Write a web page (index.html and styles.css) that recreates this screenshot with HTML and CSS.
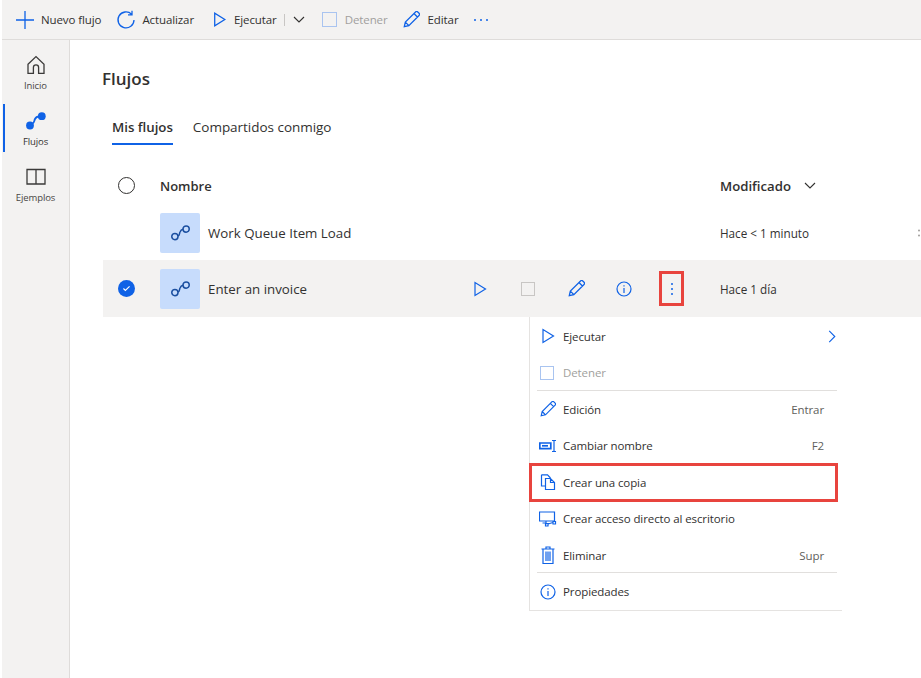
FILE: index.html
```html
<!DOCTYPE html>
<html lang="es">
<head>
<meta charset="utf-8">
<title>Flujos</title>
<link rel="stylesheet" href="styles.css">
</head>
<body>
<div class="app">
  <header class="toolbar">
    <button class="tool tool-new"><svg class="ic22" viewBox="0 0 20 20"><path d="M10 1v18M1 10h18"/></svg>Nuevo flujo</button>
    <button class="tool tool-refresh"><svg class="ic22" viewBox="0 0 20 20"><path d="M15.6 4.2A8 8 0 1 0 18 10M16 .8v4h-4"/></svg>Actualizar</button>
    <button class="tool tool-run"><svg class="ic18" viewBox="0 0 16 16"><path d="M3.5 2v12l9.5-6z"/></svg>Ejecutar</button>
    <span class="tool-sep"></span>
    <svg class="tool-chev" viewBox="0 0 12 8"><path d="M1 1l5 5 5-5"/></svg>
    <button class="tool tool-stop is-off"><span class="stop-box"></span>Detener</button>
    <button class="tool tool-edit"><svg class="ic18" viewBox="0 0 16 16"><use href="#pencil"/></svg>Editar</button>
    <svg class="tool-more" viewBox="0 0 16 4"><circle cx="2" cy="2" r="1"/><circle cx="8" cy="2" r="1"/><circle cx="14" cy="2" r="1"/></svg>
  </header>
  <div class="body">
    <nav class="side">
      <a class="side-item"><svg class="side-ic" viewBox="0 0 20 20"><path d="M2 9.200 10 1.600l8 7.600V18.400h-5.400v-6a2.600 2.600 0 0 0-5.200 0v6H2z"/></svg>Inicio</a>
      <a class="side-item is-active"><svg class="side-ic" viewBox="0 0 20 20"><circle class="dot" cx="4" cy="14.500" r="3.900"/><circle class="dot" cx="15.800" cy="5.200" r="3.900"/><path class="link" d="M6 13c2.500-1 2-3 3-5s2.500-2.500 4-2.500"/></svg>Flujos</a>
      <a class="side-item"><svg class="side-ic" viewBox="0 0 20 18"><path d="M1 1.500h18v14.500H1zM10 1.500V16"/></svg>Ejemplos</a>
    </nav>
    <main class="content">
      <h1 class="title">Flujos</h1>
      <div class="tabs">
        <span class="tab is-current">Mis flujos</span>
        <span class="tab">Compartidos conmigo</span>
      </div>
      <div class="list">
        <div class="row row-head">
          <span class="check"><span class="circle"></span></span>
          <span class="head-name">Nombre</span>
          <span class="head-mod">Modificado<svg class="head-chev" viewBox="0 0 12 8"><path d="M1 1l5 5 5-5"/></svg></span>
        </div>
        <div class="row row-flow">
          <span class="check"></span>
          <span class="thumb"><svg viewBox="0 0 20 14"><use href="#flow"/></svg></span>
          <span class="name">Work Queue Item Load</span>
          <span class="date">Hace &lt; 1 minuto</span>
          <svg class="edge-dots" viewBox="0 0 4 8"><circle cx="2" cy="1.500" r="1"/><circle cx="2" cy="6.500" r="1"/></svg>
        </div>
        <div class="row row-flow is-selected">
          <span class="check"><span class="circle-on"><svg viewBox="0 0 10 8"><path d="M1.500 4l2.200 2.200L8.500 1.500"/></svg></span></span>
          <span class="thumb"><svg viewBox="0 0 20 14"><use href="#flow"/></svg></span>
          <span class="name">Enter an invoice</span>
          <span class="actions">
            <span class="act"><svg class="ic16" viewBox="0 0 16 16"><path d="M3 1.500v13L13.500 8z"/></svg></span>
            <span class="act"><span class="act-stop"></span></span>
            <span class="act"><svg class="ic18" viewBox="0 0 16 16"><use href="#pencil"/></svg></span>
            <span class="act"><svg class="ic16" viewBox="0 0 16 16"><use href="#info"/></svg></span>
            <span class="act act-more"><svg class="kebab" viewBox="0 0 4 14"><circle cx="2" cy="2" r="1"/><circle cx="2" cy="7" r="1"/><circle cx="2" cy="12" r="1"/></svg></span>
          </span>
          <span class="date">Hace 1 día</span>
        </div>
      </div>
    </main>
  </div>
  <div class="menu">
    <div class="mi"><svg class="mi-ic" viewBox="0 0 16 16"><path d="M3 1.500v13L13.500 8z"/></svg><span class="mi-t">Ejecutar</span><svg class="mi-chev" viewBox="0 0 8 14"><path d="M1 1l6 6-6 6"/></svg></div>
    <div class="mi is-off"><span class="mi-ic"><span class="menu-stop"></span></span><span class="mi-t">Detener</span></div>
    <div class="mi-div"></div>
    <div class="mi"><svg class="mi-ic" viewBox="0 0 16 16"><use href="#pencil"/></svg><span class="mi-t">Edición</span><span class="mi-k">Entrar</span></div>
    <div class="mi"><svg class="mi-ic mi-ic-wide" viewBox="0 0 18 16"><path class="thick" d="M.8 5h11v5.600H.8z"/><path class="thick" d="M3 7.800h6"/><path d="M13 2.500h4M13 13.500h4M15 2.500v11"/></svg><span class="mi-t">Cambiar nombre</span><span class="mi-k">F2</span></div>
    <div class="mi is-marked"><svg class="mi-ic" viewBox="0 0 16 16"><path d="M1.500.8h6L10.500 4M1.500.8V12H5M5.500 4.500h5L14.500 8.500v7H5.500zM10.500 4.500v4h4"/></svg><span class="mi-t">Crear una copia</span></div>
    <div class="mi"><svg class="mi-ic mi-ic-wide" viewBox="0 0 18 16"><path d="M.5 1h15v9H.5zM7 10v3.500M3.500 12h3.500M7 12.500h2M6.500 12.500h2.500v2.500H6.500zM14 10.500h2.500V13H14zM9 13l5-1.500"/></svg><span class="mi-t">Crear acceso directo al escritorio</span></div>
    <div class="mi"><svg class="mi-ic mi-ic-tall" viewBox="0 0 14 18"><path d="M.5 3h13M5 3V1h4v2M2 3v14.500h10V3M5 5.500v9.500M7 5.500v9.500M9 5.500v9.500"/></svg><span class="mi-t">Eliminar</span><span class="mi-k">Supr</span></div>
    <div class="mi-div"></div>
    <div class="mi"><svg class="mi-ic" viewBox="0 0 16 16"><use href="#info"/></svg><span class="mi-t">Propiedades</span></div>
  </div>
</div>
<svg class="defs" width="0" height="0">
  <defs>
    <g id="pencil"><path d="M1.200 14.800l1-4.300L11.800.9a1.500 1.500 0 0 1 2.100 0l1.200 1.200a1.500 1.500 0 0 1 0 2.100L5.500 13.800zM2.200 10.500l3.300 3.300M10.300 2.400l3.300 3.300"/></g>
    <g id="info"><circle cx="8" cy="8" r="7"/><path d="M8 7v5M8 4.200v1.300"/></g>
    <g id="flow"><circle cx="5.500" cy="10" r="2.500"/><circle cx="14.500" cy="4" r="2.500"/><path d="M8 9.600c1.500-.6 1-2 1.600-3.200.5-1.200 1.200-2 2.400-2.200"/></g>
  </defs>
</svg>
</body>
</html>
```
FILE: styles.css
```css
* { box-sizing: border-box; }
html, body { margin: 0; height: 100%; background: #fff; }
body { font-family: "Open Sans", "Noto Sans", sans-serif; color: #323130; overflow: hidden; }
svg { fill: none; stroke: #0f62e6; stroke-width: 1.2; display: block; flex: none; }
.defs { position: absolute; }
.app { position: relative; width: 921px; height: 678px; padding-left: 2px; display: flex; flex-direction: column; overflow: hidden; }

.toolbar { height: 40px; flex: none; background: #f3f2f1; border-bottom: 1px solid #dedcda; display: flex; align-items: center; padding-left: 13px; }
.tool { border: 0; background: none; padding: 0; font: inherit; font-size: 11.500px; letter-spacing: -.1px; color: #323130; display: flex; align-items: center; white-space: nowrap; }
.tool svg { margin-right: 6px; }
.tool-refresh { margin-left: 15px; }
.tool-run { margin-left: 17px; }
.tool-stop { margin-left: 17px; }
.tool-edit { margin-left: 15px; }
.tool-edit svg { margin-right: 8px; }
.tool.is-off { color: #a19f9d; }
.ic22 { width: 20px; height: 20px; stroke-width: 1.300; }
.ic18 { width: 17px; height: 17px; }
.ic16 { width: 16px; height: 16px; }
.stop-box { width: 15px; height: 15px; border: 1.500px solid #a9c4f0; margin-right: 8px; }
.tool-sep { width: 1px; height: 12px; background: #c8c6c4; margin: 0 8px 0 7px; }
.tool-chev { width: 12px; height: 8px; stroke: #323130; stroke-width: 1.100; }
.tool-more { width: 16px; height: 4px; fill: #0f62e6; stroke: none; margin-left: 15px; }

.body { flex: 1; display: flex; min-height: 0; }
.side { width: 68px; flex: none; background: #f3f2f1; border-right: 1px solid #dedcda; padding-top: 8px; display: flex; flex-direction: column; gap: 8px; }
.side-item { height: 48px; border-left: 2px solid transparent; margin-left: 1px; padding-right: 3px; display: flex; flex-direction: column; align-items: center; justify-content: flex-start; gap: 1px; padding-top: 4px; font-size: 9.500px; letter-spacing: -.1px; color: #484644; }
.side-item.is-active { border-left-color: #0f62e6; color: #323130; font-weight: 500; }
.side-ic { width: 20px; height: 20px; stroke: #3b3a39; stroke-width: 1.300; margin-top: 3px; margin-bottom: 3px; }
.is-active .side-ic .dot { fill: #0f62e6; stroke: none; }
.is-active .side-ic .link { stroke: #0f62e6; stroke-width: 1.800; }

.content { flex: 1; min-width: 0; padding: 27px 0 0 33px; }
.title { margin: 0 0 0 -1px; font-size: 17px; line-height: 24px; font-weight: 600; color: #323130; }
.tabs { display: flex; gap: 20px; margin: 27px 0 0 9px; }
.tab { font-size: 13.500px; line-height: 18px; padding-bottom: 7px; letter-spacing: -.03px; border-bottom: 2px solid transparent; }
.tab.is-current { font-weight: 600; font-size: 13.300px; border-bottom-color: #0f62e6; }

.list { margin-top: 20.500px; }
.row { display: flex; align-items: center; position: relative; padding-top: 1px; }
.row-head { height: 39px; }
.row-flow { height: 55px; }
.row-flow.is-selected { height: 57px; background: #f3f2f1; }
.check { width: 57px; flex: none; padding-left: 15px; }
.circle { display: block; width: 17px; height: 17px; border: 1px solid #323130; border-radius: 50%; }
.circle-on { width: 17px; height: 17px; border-radius: 50%; background: #0f62e6; display: flex; align-items: center; justify-content: center; }
.circle-on svg { width: 9px; height: 7px; stroke: #fff; stroke-width: 1.300; }
.head-name { font-size: 13px; font-weight: 600; }
.head-mod { font-size: 13.200px; font-weight: 600; margin-left: auto; width: 201px; display: flex; align-items: center; }
.head-chev { width: 12px; height: 8px; stroke: #323130; stroke-width: 1.100; margin-left: 13px; }
.thumb { width: 40px; height: 40px; border-radius: 2px; background: #c7dcfc; display: flex; align-items: center; justify-content: center; flex: none; margin-right: 8px; }
.thumb svg { width: 25px; height: 17.500px; stroke: #1b4fa0; stroke-width: 1.200; }
.name { font-size: 13.300px; }
.date { font-size: 11.700px; position: absolute; left: 617px; }
.edge-dots { position: absolute; left: 814px; width: 4px; height: 8px; fill: #a19f9d; stroke: none; }
.actions { position: absolute; left: 353px; display: flex; }
.act { width: 48px; height: 35px; display: flex; align-items: center; justify-content: center; }
.act-stop { width: 14px; height: 14px; border: 1px solid #c8c6c4; }
.act-more { width: 25px; margin-left: 11px; border: 3px solid #e8443e; }
.kebab { width: 4px; height: 14px; fill: #0f62e6; stroke: none; }

.menu { position: absolute; left: 529px; top: 317px; width: 313px; height: 294px; background: #fff; border-left: 1px solid #e5e3e1; border-bottom: 1px solid #e5e3e1; padding: 1px 5px 0 0; }
.mi { height: 36.500px; display: flex; align-items: center; padding: 0 13px 0 10px; font-size: 11.500px; letter-spacing: -.1px; color: #323130; position: relative; }
.mi-ic { width: 16px; height: 16px; margin-right: 7px; flex: none; display: flex; align-items: center; }
.mi-ic-wide { width: 18px; margin-left: -1px; margin-right: 6px; }
.mi-ic-tall { height: 18px; }
.thick { stroke-width: 1.700; }
.mi-t { flex: 1; white-space: nowrap; }
.mi-k { color: #605e5c; }
.mi-chev { position: absolute; right: 1px; width: 8px; height: 13px; }
.is-off { color: #a19f9d; }
.menu-stop { display: block; width: 14px; height: 14px; border: 1.200px solid #a9c4f0; }
.mi-div { height: 0; border-top: 1px solid #e1dfdd; margin: -1.500px 0 .5px 7px; }
.is-marked { outline: 3px solid #e8443e; outline-offset: -2px; }
```
